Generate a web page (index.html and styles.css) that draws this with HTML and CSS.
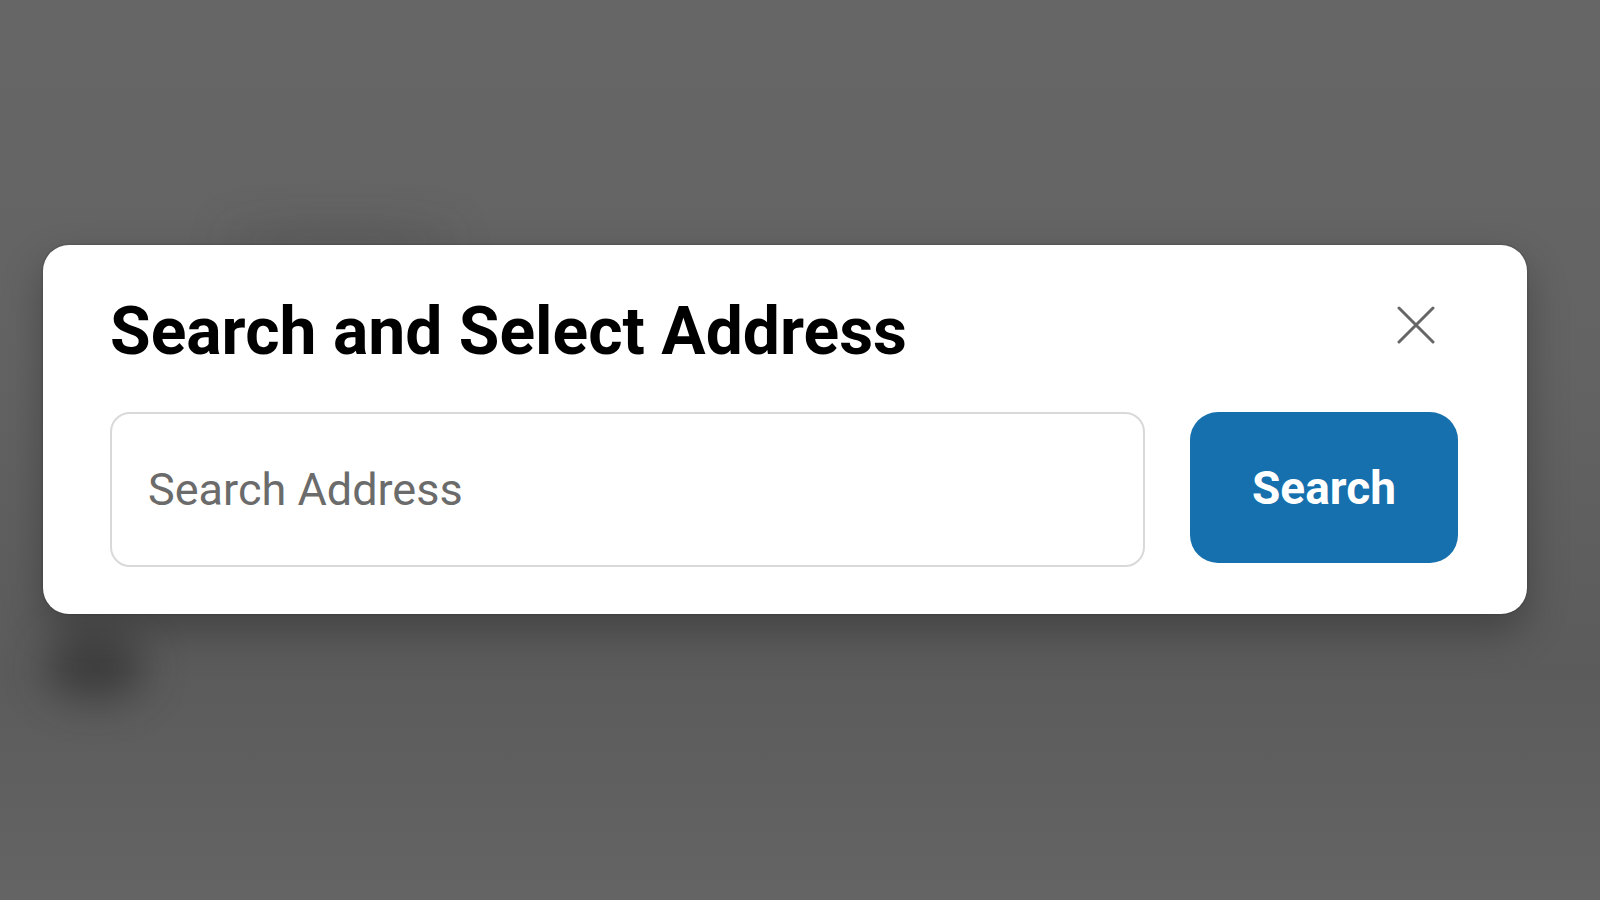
FILE: index.html
```html
<!DOCTYPE html>
<html lang="en">
<head>
    <meta charset="UTF-8">
    <meta name="viewport" content="width=device-width, initial-scale=1.0">
    <title>Search and Select Address</title>
    <link rel="stylesheet" href="styles.css">
</head>
<body>
<div class="backdrop">
    <div class="blob blob-left"></div>
    <div class="blob blob-top"></div>

    <div class="modal">
        <div class="modal-header">
            <h1>Search and Select Address</h1>
            <button class="close" type="button" aria-label="Close">
                <svg width="38" height="38" viewBox="0 0 38 38" fill="none" stroke="#666" stroke-width="3" stroke-linecap="round">
                    <path d="M2 2 L36 36 M36 2 L2 36"/>
                </svg>
            </button>
        </div>
        <form class="search-row" onsubmit="return false">
            <input type="text" class="search-input" placeholder="Search Address">
            <button type="submit" class="search-btn">Search</button>
        </form>
    </div>
</div>
</body>
</html>
```

FILE: styles.css
```css
html, body { margin: 0; height: 100%; }
body { background: #646464; font-family: Roboto, 'Liberation Sans', sans-serif; overflow: hidden; }

.backdrop {
    position: relative; height: 100%; padding: 245px 0 0 43px; box-sizing: border-box;
    background: linear-gradient(#666666 0%, #636363 40%, #5b5b5b 75%, #646464 100%);
}
.blob { position: absolute; border-radius: 50%; filter: blur(20px); }
.blob-left { left: 45px; top: 635px; width: 100px; height: 65px; background: rgba(30,30,30,0.5); }
.blob-top { left: 220px; top: 225px; width: 240px; height: 30px; background: rgba(40,40,40,0.18); }

.modal {
    position: relative; width: 1484px; box-sizing: border-box;
    padding: 47px 69px 47px 67px;
    background: white; border-radius: 26px;
    box-shadow: 0 0 0 1.5px rgba(0,0,0,0.08), 0 18px 40px rgba(0,0,0,0.28);
}
.modal-header { display: flex; justify-content: space-between; align-items: flex-start; }
h1 {
    margin: 0; font-size: 66px; line-height: 79px; font-weight: 700; color: #000;
}
.close {
    border: none; background: none; padding: 0; margin: 14px 23px 0 0;
    width: 38px; height: 38px; cursor: pointer;
}
.close svg { display: block; }

.search-row { display: flex; align-items: flex-start; gap: 45px; margin: 41px 0 0; }
.search-input {
    flex: 1; height: 155px; box-sizing: border-box; padding: 0 36px;
    border: 2px solid #d9d9d9; border-radius: 20px;
    font-family: Roboto, 'Liberation Sans', sans-serif; font-size: 45px; color: #333;
    outline: none;
}
.search-input::placeholder { color: #6b6b6b; }
.search-btn {
    width: 268px; height: 151px; border: none; border-radius: 28px;
    background: #1670ad; color: white; cursor: pointer;
    font-family: Roboto, 'Liberation Sans', sans-serif; font-size: 46px; font-weight: 700;
}
.search-btn:hover { background: #135f94; }
```
